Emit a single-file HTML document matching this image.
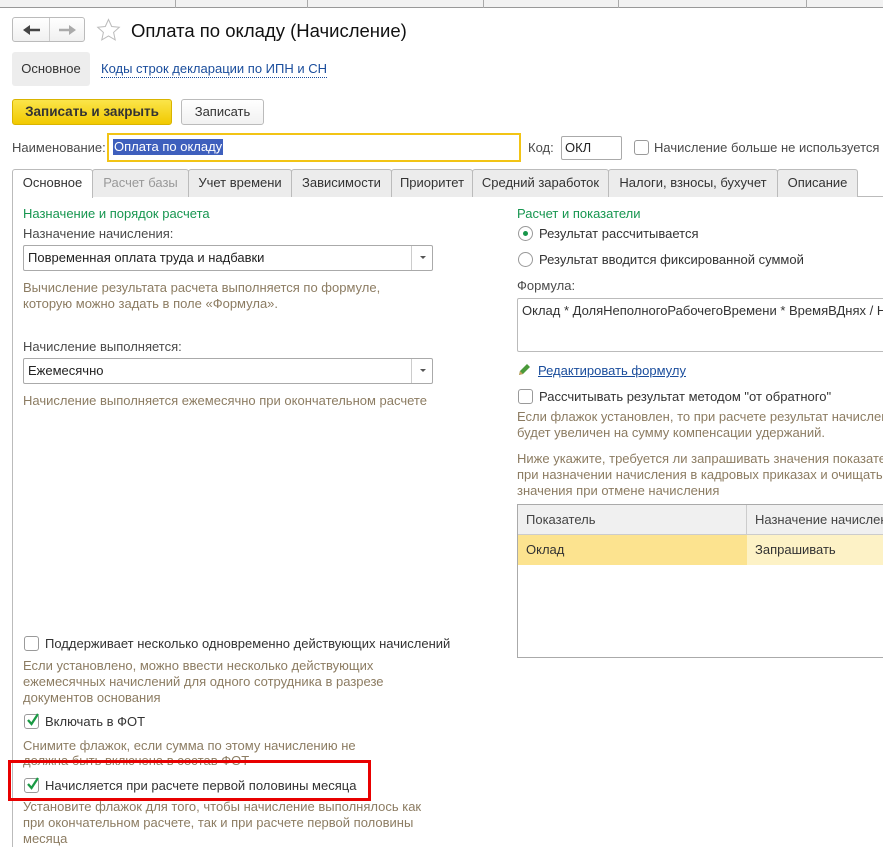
<!DOCTYPE html>
<html><head><meta charset="utf-8"><style>
*{box-sizing:border-box;margin:0;padding:0}
body{width:883px;height:847px;overflow:hidden;background:#fff;font-family:"Liberation Sans",Arial,sans-serif;font-size:13px;color:#333;position:relative}
.a{position:absolute;white-space:nowrap}
.h{color:#8c7c62}
.g{color:#179650}
.lbl{color:#4a4a4a}
.cb{position:absolute;width:15px;height:15px;border:1px solid #9a9a9a;border-radius:3px;background:#fff}
.sep{position:absolute;top:0;width:1px;height:8px;background:#aaa}
.tab{position:absolute;top:169px;height:28px;border:1px solid #bbb;border-bottom:none;background:#ececec;text-align:center;line-height:26px;color:#333;border-radius:3px 3px 0 0}
.sel{position:absolute;height:26px;border:1px solid #aaa;border-radius:2px;background:#fff;padding-left:4px;line-height:24px;color:#222}
.sel i{position:absolute;right:0;top:0;width:21px;height:24px;border-left:1px solid #ccc}
.sel i:after{content:"";position:absolute;left:8px;top:10px;border:3px solid transparent;border-top:3px solid #555}
</style></head><body>
<div class="a" style="left:0;top:0;width:883px;height:8px;background:#f2f2f2;border-bottom:1px solid #999"></div>
<div class="sep" style="left:175px"></div><div class="sep" style="left:307px"></div><div class="sep" style="left:483px"></div><div class="sep" style="left:618px"></div><div class="sep" style="left:806px"></div>

<div class="a" style="left:12px;top:17px;width:73px;height:25px;border:1px solid #bbb;border-radius:3px;background:linear-gradient(#fff,#f0f0f0)"></div>
<div class="a" style="left:49px;top:18px;width:1px;height:23px;background:#ccc"></div>
<svg class="a" style="left:23px;top:24px" width="18" height="12"><path d="M5 6h12" stroke="#444" stroke-width="2.5"/><path d="M0 6l7-5v10z" fill="#444"/></svg>
<svg class="a" style="left:59px;top:24px" width="18" height="12"><path d="M0 6h12" stroke="#aaa" stroke-width="2.5"/><path d="M17 6l-7-5v10z" fill="#aaa"/></svg>
<svg class="a" style="left:96px;top:18px" width="25" height="24"><path d="M12.5 1.5l3.2 7 7.6.8-5.7 5.1 1.6 7.5-6.7-3.9-6.7 3.9 1.6-7.5-5.7-5.1 7.6-.8z" fill="none" stroke="#bbb" stroke-width="1"/></svg>
<div class="a" style="left:131px;top:20px;font-size:18.5px;color:#111">Оплата по окладу (Начисление)</div>

<div class="a" style="left:12px;top:52px;width:78px;height:34px;background:#ededed;border-radius:3px;line-height:34px;text-align:center;color:#333">Основное</div>
<div class="a" style="left:101px;top:61px;color:#1a4d9c;border-bottom:1px dotted #1a4d9c;line-height:16px">Коды строк декларации по ИПН и СН</div>

<div class="a" style="left:12px;top:99px;width:160px;height:26px;background:linear-gradient(#fbe54a,#f1c900);border:1px solid #d9b400;border-radius:3px;text-align:center;line-height:24px;font-weight:bold;color:#333;font-size:13.5px">Записать и закрыть</div>
<div class="a" style="left:181px;top:99px;width:83px;height:26px;background:linear-gradient(#fff,#f1f1f1);border:1px solid #bbb;border-radius:3px;text-align:center;line-height:24px;color:#333">Записать</div>

<div class="a lbl" style="left:12px;top:140px">Наименование:</div>
<div class="a" style="left:107px;top:133px;width:414px;height:29px;border:2px solid #f2c415"></div>
<div class="a" style="left:113px;top:139px;background:#3e5fbd;color:#fff;line-height:16px;padding:0 1px">Оплата по окладу</div>
<div class="a lbl" style="left:528px;top:140px">Код:</div>
<div class="a" style="left:561px;top:136px;width:61px;height:24px;border:1px solid #aaa;border-radius:2px;padding-left:3px;line-height:22px;color:#222">ОКЛ</div>
<div class="cb" style="left:634px;top:140px"></div>
<div class="a lbl" style="left:654px;top:140px">Начисление больше не используется</div>

<div class="a" style="left:12px;top:196px;width:871px;height:1px;background:#bbb"></div>
<div class="a" style="left:12px;top:196px;width:1px;height:651px;background:#bbb"></div>
<div class="tab" style="left:12px;width:81px;background:#fff;height:29px">Основное</div>
<div class="tab" style="left:92px;width:97px;color:#999">Расчет базы</div>
<div class="tab" style="left:188px;width:104px">Учет времени</div>
<div class="tab" style="left:291px;width:101px">Зависимости</div>
<div class="tab" style="left:391px;width:82px">Приоритет</div>
<div class="tab" style="left:472px;width:137px">Средний заработок</div>
<div class="tab" style="left:608px;width:170px">Налоги, взносы, бухучет</div>
<div class="tab" style="left:777px;width:81px">Описание</div>

<div class="a g" style="left:23px;top:206px">Назначение и порядок расчета</div>
<div class="a lbl" style="left:23px;top:226px">Назначение начисления:</div>
<div class="sel" style="left:23px;top:245px;width:410px">Повременная оплата труда и надбавки<i></i></div>
<div class="a h" style="left:23px;top:280px">Вычисление результата расчета выполняется по формуле,</div>
<div class="a h" style="left:23px;top:296px">которую можно задать в поле «Формула».</div>
<div class="a lbl" style="left:23px;top:339px">Начисление выполняется:</div>
<div class="sel" style="left:23px;top:358px;width:410px">Ежемесячно<i></i></div>
<div class="a h" style="left:23px;top:393px">Начисление выполняется ежемесячно при окончательном расчете</div>

<div class="cb" style="left:24px;top:636px"></div>
<div class="a" style="left:45px;top:636px;color:#333">Поддерживает несколько одновременно действующих начислений</div>
<div class="a h" style="left:23px;top:658px">Если установлено, можно ввести несколько действующих</div>
<div class="a h" style="left:23px;top:674px">ежемесячных начислений для одного сотрудника в разрезе</div>
<div class="a h" style="left:23px;top:690px">документов основания</div>
<div class="cb" style="left:24px;top:714px"></div>
<svg class="a" style="left:25px;top:712px" width="16" height="16"><path d="M3 8l3.5 4L13 2" stroke="#1a9a44" stroke-width="2.3" fill="none"/></svg>
<div class="a" style="left:45px;top:714px;color:#333">Включать в ФОТ</div>
<div class="a h" style="left:23px;top:738px">Снимите флажок, если сумма по этому начислению не</div>
<div class="a h" style="left:23px;top:753px">должна быть включена в состав ФОТ</div>
<div class="a" style="left:8px;top:760px;width:363px;height:41px;border:3px solid #e80000"></div>
<div class="cb" style="left:24px;top:778px"></div>
<svg class="a" style="left:25px;top:776px" width="16" height="16"><path d="M3 8l3.5 4L13 2" stroke="#1a9a44" stroke-width="2.3" fill="none"/></svg>
<div class="a" style="left:45px;top:778px;color:#333">Начисляется при расчете первой половины месяца</div>
<div class="a h" style="left:23px;top:799px">Установите флажок для того, чтобы начисление выполнялось как</div>
<div class="a h" style="left:23px;top:815px">при окончательном расчете, так и при расчете первой половины</div>
<div class="a h" style="left:23px;top:831px">месяца</div>

<div class="a g" style="left:517px;top:206px">Расчет и показатели</div>
<div class="a" style="left:518px;top:226px;width:15px;height:15px;border:1px solid #999;border-radius:50%"></div>
<div class="a" style="left:523px;top:231px;width:5px;height:5px;background:#17964a;border-radius:50%"></div>
<div class="a" style="left:539px;top:226px;color:#333">Результат рассчитывается</div>
<div class="a" style="left:518px;top:252px;width:15px;height:15px;border:1px solid #999;border-radius:50%"></div>
<div class="a" style="left:539px;top:252px;color:#333">Результат вводится фиксированной суммой</div>
<div class="a lbl" style="left:517px;top:278px">Формула:</div>
<div class="a" style="left:517px;top:298px;width:380px;height:54px;border:1px solid #bbb;border-radius:2px;padding:4px 0 0 4px;color:#333">Оклад * ДоляНеполногоРабочегоВремени * ВремяВДнях / Н</div>
<svg class="a" style="left:517px;top:362px" width="15" height="15"><path d="M2 13l1-4 7-7 3 3-7 7z" fill="#4a9a3a"/><path d="M2 13l1-4 3 3z" fill="#c8a060"/></svg>
<div class="a" style="left:538px;top:363px;color:#1a4d9c;text-decoration:underline">Редактировать формулу</div>
<div class="cb" style="left:518px;top:389px"></div>
<div class="a" style="left:539px;top:389px;color:#333">Рассчитывать результат методом "от обратного"</div>
<div class="a h" style="left:517px;top:409px">Если флажок установлен, то при расчете результат начислен</div>
<div class="a h" style="left:517px;top:425px">будет увеличен на сумму компенсации удержаний.</div>
<div class="a h" style="left:517px;top:451px">Ниже укажите, требуется ли запрашивать значения показате</div>
<div class="a h" style="left:517px;top:467px">при назначении начисления в кадровых приказах и очищать</div>
<div class="a h" style="left:517px;top:483px">значения при отмене начисления</div>
<div class="a" style="left:517px;top:504px;width:380px;height:154px;border:1px solid #aaa"></div>
<div class="a" style="left:518px;top:505px;width:365px;height:30px;background:#f0f0f0;border-bottom:1px solid #ccc"></div>
<div class="a" style="left:746px;top:505px;width:1px;height:30px;background:#ccc"></div>
<div class="a" style="left:526px;top:512px;color:#444">Показатель</div>
<div class="a" style="left:755px;top:512px;color:#444">Назначение начислен</div>
<div class="a" style="left:518px;top:535px;width:229px;height:30px;background:#fce38f"></div>
<div class="a" style="left:747px;top:535px;width:136px;height:30px;background:#fdf2c6"></div>
<div class="a" style="left:526px;top:542px;color:#333">Оклад</div>
<div class="a" style="left:755px;top:542px;color:#333">Запрашивать</div>
</body></html>
